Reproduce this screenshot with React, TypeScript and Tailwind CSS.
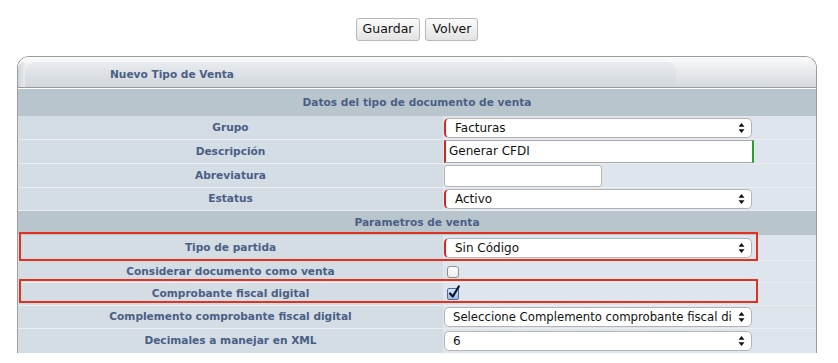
import React from "react";

const FONT = { fontFamily: '"DejaVu Sans", Verdana, sans-serif' };

function Arrows() {
  return (
    <svg width="7" height="11" viewBox="0 0 7 11" className="absolute right-[6px] top-1/2 -translate-y-1/2">
      <path d="M3.5 0.5 L6.5 4.3 L0.5 4.3 Z" fill="#111" />
      <path d="M3.5 10.5 L6.5 6.7 L0.5 6.7 Z" fill="#111" />
    </svg>
  );
}

function Select({ value, req = false, small = false }: { value: string; req?: boolean; small?: boolean }) {
  return (
    <div
      className={
        "relative h-[20px] w-[308px] rounded-[5px] border border-[#b4b4b4] bg-white pr-[14px] leading-[18px] text-[#111] " +
        (small ? "text-[11.7px] " : "text-[12px] ") +
        (req ? "border-l-2 border-l-[#d9231d] pl-[9px]" : "pl-[8px]")
      }
    >
      <div className="whitespace-nowrap">{value}</div>
      <Arrows />
    </div>
  );
}

function Row({
  label,
  h,
  children,
  sep = true,
}: {
  label: string;
  h: string;
  children?: React.ReactNode;
  sep?: boolean;
}) {
  return (
    <div className={"relative grid grid-cols-[425px_1fr] " + h + (sep ? " border-b border-[#eaeef2]" : "")}>
      <div className="flex items-center justify-center bg-[#d4dce4] text-[10.6px] font-bold text-[#4a5f86]">{label}</div>
      <div className="flex items-center bg-[#dfe5ec] pl-[1px]">{children}</div>
    </div>
  );
}

function Band({ text, h, top = false }: { text: string; h: string; top?: boolean }) {
  return (
    <div
      className={
        "flex items-center justify-center bg-[#b9c5cc] text-[10.6px] font-bold text-[#4a5f86] " +
        h +
        (top ? " border-t border-white" : "")
      }
    >
      {text}
    </div>
  );
}

export default function App() {
  return (
    <div className="min-h-[363px] w-[838px] bg-white" style={FONT}>
      <div className="ml-[17px] w-[800px] pt-[18px]">
        <div className="flex justify-center gap-[5px]">
          <button className="h-[23px] rounded-[3px] border border-[#b8b8b8] bg-gradient-to-b from-[#fbfbfb] to-[#e3e3e3] px-[6px] text-[12.5px] text-[#111]">
            Guardar
          </button>
          <button className="h-[23px] rounded-[3px] border border-[#b8b8b8] bg-gradient-to-b from-[#fbfbfb] to-[#e3e3e3] px-[6px] text-[12.5px] text-[#111]">
            Volver
          </button>
        </div>

        <div className="mt-[15px] rounded-t-[12px] border-x border-t border-[#9c9c9c]">
          <div className="flex h-[31px] rounded-t-[11px] border-b border-[#9a9a9a] bg-gradient-to-b from-[#fafbfc] to-[#d4d9de] pt-[5px]">
            <div className="h-full w-[7px] rounded-tl-[11px] bg-gradient-to-r from-[#cfd4d8] to-[#e9ecee]" />
            <div className="flex h-full w-[651px] items-center rounded-tl-[12px] rounded-tr-[9px] bg-gradient-to-b from-[#e9ecef] to-[#d1d7dc] pl-[85px] text-[10.6px] font-bold text-[#4a5f86]">
              Nuevo Tipo de Venta
            </div>
          </div>

          <Band text="Datos del tipo de documento de venta" h="h-[28px]" top />
          <Row label="Grupo" h="h-[24px]">
            <Select value="Facturas" req />
          </Row>
          <Row label="Descripción" h="h-[24px]">
            <div className="h-[23px] w-[310px] border-y border-x-2 border-y-[#a8a8a8] border-l-[#d9231d] border-r-[#23a12b] bg-white pl-[3px] text-[12px] leading-[21px] text-[#111]">
              Generar CFDI
            </div>
          </Row>
          <Row label="Abreviatura" h="h-[24px]">
            <div className="h-[22px] w-[158px] rounded-[3px] border border-[#b4b4b4] bg-white" />
          </Row>
          <Row label="Estatus" h="h-[23px]">
            <Select value="Activo" req />
          </Row>
          <Band text="Parametros de venta" h="h-[24px]" />
          <Row label="Tipo de partida" h="h-[26px]">
            <Select value="Sin Código" req />
            <div className="pointer-events-none absolute left-[1px] top-[-3px] h-[29px] w-[739px] border-2 border-[#e0321f]" />
          </Row>
          <Row label="Considerar documento como venta" h="h-[22px]">
            <div className="ml-[3px] h-[12px] w-[12px] rounded-[3px] border border-[#8e8e8e] bg-gradient-to-b from-white to-[#ececec]" />
          </Row>
          <Row label="Comprobante fiscal digital" h="h-[23px]">
            <div className="relative ml-[3px] h-[12px] w-[12px] rounded-[2px] border border-[#4d6f9c] bg-gradient-to-b from-[#d3e3f6] to-[#9dbce4]">
              <svg width="13" height="14" viewBox="0 0 13 14" className="absolute left-[0px] top-[-4px]">
                <path d="M2 8.5 L4.8 11.5 L10.8 1.5" stroke="#0c1526" strokeWidth="2.2" fill="none" strokeLinecap="round" strokeLinejoin="round" />
              </svg>
            </div>
            <div className="pointer-events-none absolute left-[1px] top-[-4px] h-[24px] w-[739px] border-2 border-[#e0321f]" />
          </Row>
          <Row label="Complemento comprobante fiscal digital" h="h-[23px]">
            <Select value="Seleccione Complemento comprobante fiscal di" small />
          </Row>
          <Row label="Decimales a manejar en XML" h="h-[24px]" sep={false}>
            <Select value="6" />
          </Row>
        </div>
      </div>
    </div>
  );
}
